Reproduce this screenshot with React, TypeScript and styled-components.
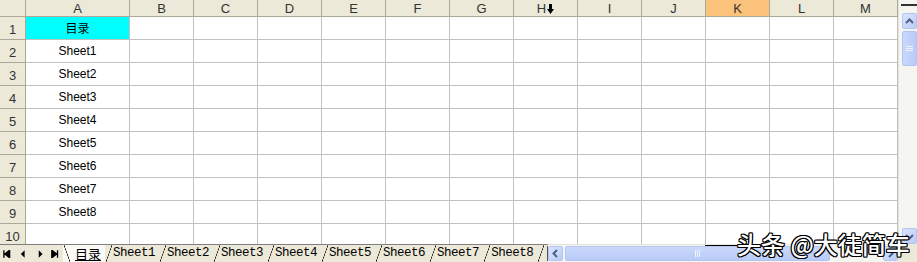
import { type FC } from 'react'
import styled, { createGlobalStyle } from 'styled-components'

const GlobalStyle = createGlobalStyle`
  html, body {
    margin: 0;
    padding: 0;
    background: #fff;
    overflow: hidden;
  }
`

const COLS = ['A', 'B', 'C', 'D', 'E', 'F', 'G', 'H', 'I', 'J', 'K', 'L', 'M']
const ROWS = 10
const SHEETS = ['Sheet1', 'Sheet2', 'Sheet3', 'Sheet4', 'Sheet5', 'Sheet6', 'Sheet7', 'Sheet8']
const cellText = (row: number): string => {
  if (row === 1) return '目录'
  if (row <= 9) return `Sheet${row - 1}`
  return ''
}

const Window = styled.div`
  position: relative;
  width: 917px;
  height: 262px;
  display: flex;
  flex-direction: column;
  overflow: hidden;
  background: #fff;
  font-family: 'Liberation Sans', Arial, 'Noto Sans CJK SC', sans-serif;
`

const Main = styled.div`
  display: flex;
  height: 244px;
  overflow: hidden;
`

const Grid = styled.div`
  display: grid;
  grid-template-columns: 26px 104px repeat(12, 64px);
  grid-template-rows: 17px repeat(${ROWS}, 23px);
  width: 898px;
  flex: none;
`

const HeadCell = styled.div<{ $selected?: boolean }>`
  box-sizing: border-box;
  display: flex;
  align-items: center;
  justify-content: center;
  background: ${p => (p.$selected ? '#fbc27c' : '#ece9d8')};
  border-right: 1px solid #aca899;
  border-bottom: 1px solid #aca899;
  color: #333;
  font-size: 13px;
  line-height: 1;
  padding-top: 1px;
`

const RowHead = styled(HeadCell)`
  padding-top: 3px;
  font-size: 13px;
`

const Cell = styled.div<{ $fill?: string }>`
  box-sizing: border-box;
  display: flex;
  align-items: center;
  justify-content: center;
  background: ${p => p.$fill ?? '#fff'};
  border-right: 1px solid #c0c0c0;
  border-bottom: 1px solid #c0c0c0;
  color: #000;
  font-size: 12px;
  padding-bottom: 1px;
`

const ColArrow = styled.svg`
  width: 7px;
  height: 10px;
  margin-left: 1px;
`

const VScroll = styled.div`
  width: 19px;
  flex: none;
  display: flex;
  flex-direction: column;
  align-items: flex-end;
  background: #f5f5f1;
  border-left: 1px solid #e4e3dc;
  box-sizing: border-box;
`

const SplitBox = styled.div`
  width: 16px;
  height: 9px;
  box-sizing: border-box;
  border-top: 2px solid #333;
  margin-top: 4px;
`

const ScrollButton = styled.div<{ $w: number; $h: number }>`
  width: ${p => p.$w}px;
  height: ${p => p.$h}px;
  flex: none;
  box-sizing: border-box;
  display: flex;
  align-items: center;
  justify-content: center;
  background: linear-gradient(135deg, #dbe5fd, #b9cbf7);
  border: 1px solid #b1c4f2;
  border-radius: 2px;
  color: #4d6185;
`

const VThumb = styled(ScrollButton)`
  margin-top: 2px;
  background: linear-gradient(90deg, #cad8fc, #b8cbf7);
`

const VTrack = styled.div`
  flex: 1;
`

const Bottom = styled.div`
  display: flex;
  height: 18px;
  flex: none;
`

const TabBar = styled.div`
  width: 548px;
  flex: none;
  display: flex;
  align-items: stretch;
  background: #ece9d8;
  border-top: 1px solid #7f7f7f;
  box-sizing: border-box;
`

const Nav = styled.div`
  width: 63px;
  flex: none;
  display: flex;
  align-items: center;
  padding-left: 2px;
  box-sizing: border-box;
  background: #ece9d8;
`

const NavButton = styled.svg`
  width: 16px;
  height: 8px;
`

const Slant = `
  content: '';
  position: absolute;
  top: 0;
  bottom: 0;
  left: 1px;
  width: 6px;
`

const Tab = styled.div<{ $active?: boolean }>`
  position: relative;
  flex: none;
  display: flex;
  align-items: center;
  white-space: nowrap;
  padding: ${p => (p.$active ? '0 4px 0 12px' : '0 4px 0 8px')};
  background: ${p => (p.$active ? '#fbfaf6' : '#ece9d8')};
  font-family: ${p =>
    p.$active
      ? "'Noto Sans CJK SC', sans-serif"
      : "'Liberation Mono', 'Courier New', monospace"};
  font-size: ${p => (p.$active ? '13px' : '12.5px')};
  letter-spacing: ${p => (p.$active ? '0' : '-0.5px')};
  text-decoration: ${p => (p.$active ? 'underline' : 'none')};
  text-underline-offset: 1px;
  color: #000;
  line-height: 1;

  &::before {
    ${Slant}
    background: linear-gradient(
      ${p => (p.$active ? 'to top right' : 'to top left')},
      transparent calc(50% - 0.6px),
      #000 50%,
      transparent calc(50% + 0.6px)
    );
  }
`

const TabEnd = styled.div`
  position: relative;
  flex: none;
  width: 12px;

  &::before {
    ${Slant}
    background: linear-gradient(
      to top left,
      transparent calc(50% - 0.6px),
      #000 50%,
      transparent calc(50% + 0.6px)
    );
  }

  &::after {
    content: '';
    position: absolute;
    top: 1px;
    bottom: 1px;
    right: 1px;
    width: 1px;
    background: #555;
  }
`

const HScroll = styled.div`
  flex: 1;
  display: flex;
  align-items: center;
  background: #f5f5f1;
  border-top: 1px solid #e4e3dc;
  box-sizing: border-box;
`

const HThumb = styled(ScrollButton)`
  margin-left: 2px;
  background: linear-gradient(180deg, #cad8fc, #b8cbf7);
`

const HTrack = styled.div`
  flex: 1;
`

const Corner = styled.div`
  width: 19px;
  flex: none;
  background: #ece9d8;
`

const Watermark = styled.div`
  position: absolute;
  left: 705px;
  top: 227px;
  display: flex;
  align-items: center;
  height: 32px;
  font-family: 'Noto Sans CJK SC', sans-serif;
  font-size: 24px;
  font-weight: 500;
  color: #fff;
  white-space: nowrap;
  text-shadow:
    1px 0 0 #000, -1px 0 0 #000, 0 1px 0 #000, 0 -1px 0 #000,
    1px 1px 0 #000, -1px -1px 0 #000, 1px -1px 0 #000, -1px 1px 0 #000;

  &::before {
    content: '';
    width: 32px;
    height: 1px;
    background: #000;
    margin-top: 4px;
  }
`

const Chevron: FC<{ dir: 'up' | 'down' | 'left' | 'right' }> = ({ dir }) => {
  const d = {
    up: 'M1 6 L4.5 2.5 L8 6',
    down: 'M1 3 L4.5 6.5 L8 3',
    left: 'M6 1 L2.5 4.5 L6 8',
    right: 'M3 1 L6.5 4.5 L3 8',
  }[dir]
  return (
    <svg width="9" height="9" viewBox="0 0 9 9">
      <path d={d} fill="none" stroke="#4d6185" strokeWidth="2" />
    </svg>
  )
}

const Grip: FC<{ vertical?: boolean }> = ({ vertical }) =>
  vertical ? (
    <svg width="7" height="7" viewBox="0 0 7 7">
      <path d="M0 1.5 H7 M0 3.5 H7 M0 5.5 H7" stroke="#eef3fe" strokeWidth="1" />
    </svg>
  ) : (
    <svg width="7" height="7" viewBox="0 0 7 7">
      <path d="M1.5 0 V7 M3.5 0 V7 M5.5 0 V7" stroke="#eef3fe" strokeWidth="1" />
    </svg>
  )

const App: FC = () => {
  return (
    <Window>
      <GlobalStyle />
      <Main>
        <Grid>
          <HeadCell />
          {COLS.map(c => (
            <HeadCell key={c} $selected={c === 'K'}>
              {c}
              {c === 'H' && (
                <ColArrow viewBox="0 0 7 10">
                  <path d="M2 0 H5 V5 H7 L3.5 10 L0 5 H2 Z" fill="#000" />
                </ColArrow>
              )}
            </HeadCell>
          ))}
          {Array.from({ length: ROWS }, (_, i) => i + 1).map(row => [
            <RowHead key={`h${row}`}>{row}</RowHead>,
            ...COLS.map(c => (
              <Cell key={`${c}${row}`} $fill={c === 'A' && row === 1 ? '#00ffff' : undefined}>
                {c === 'A' ? cellText(row) : ''}
              </Cell>
            )),
          ])}
        </Grid>
        <VScroll>
          <SplitBox />
          <ScrollButton $w={15} $h={16}>
            <Chevron dir="up" />
          </ScrollButton>
          <VThumb $w={15} $h={35}>
            <Grip vertical />
          </VThumb>
          <VTrack />
          <ScrollButton $w={15} $h={16}>
            <Chevron dir="down" />
          </ScrollButton>
        </VScroll>
      </Main>
      <Bottom>
        <TabBar>
          <Nav>
            <NavButton viewBox="0 0 16 8">
              <path d="M2 0 V8 M8 0 V8 L3 4 Z" stroke="#000" strokeWidth="1.4" fill="#000" />
            </NavButton>
            <NavButton viewBox="0 0 16 8">
              <path d="M8 0 V8 L4 4 Z" fill="#000" />
            </NavButton>
            <NavButton viewBox="0 0 16 8">
              <path d="M6 0 V8 L10 4 Z" fill="#000" />
            </NavButton>
            <NavButton viewBox="0 0 16 8">
              <path d="M4 0 V8 L9 4 Z M10 0 V8" stroke="#000" strokeWidth="1.4" fill="#000" />
            </NavButton>
          </Nav>
          <Tab $active>目录</Tab>
          {SHEETS.map(s => (
            <Tab key={s}>{s}</Tab>
          ))}
          <TabEnd />
        </TabBar>
        <HScroll>
          <ScrollButton $w={15} $h={15}>
            <Chevron dir="left" />
          </ScrollButton>
          <HThumb $w={265} $h={15}>
            <Grip />
          </HThumb>
          <HTrack />
          <ScrollButton $w={15} $h={15}>
            <Chevron dir="right" />
          </ScrollButton>
        </HScroll>
        <Corner />
      </Bottom>
      <Watermark>头条 @大徒简车</Watermark>
    </Window>
  )
}

export default App
